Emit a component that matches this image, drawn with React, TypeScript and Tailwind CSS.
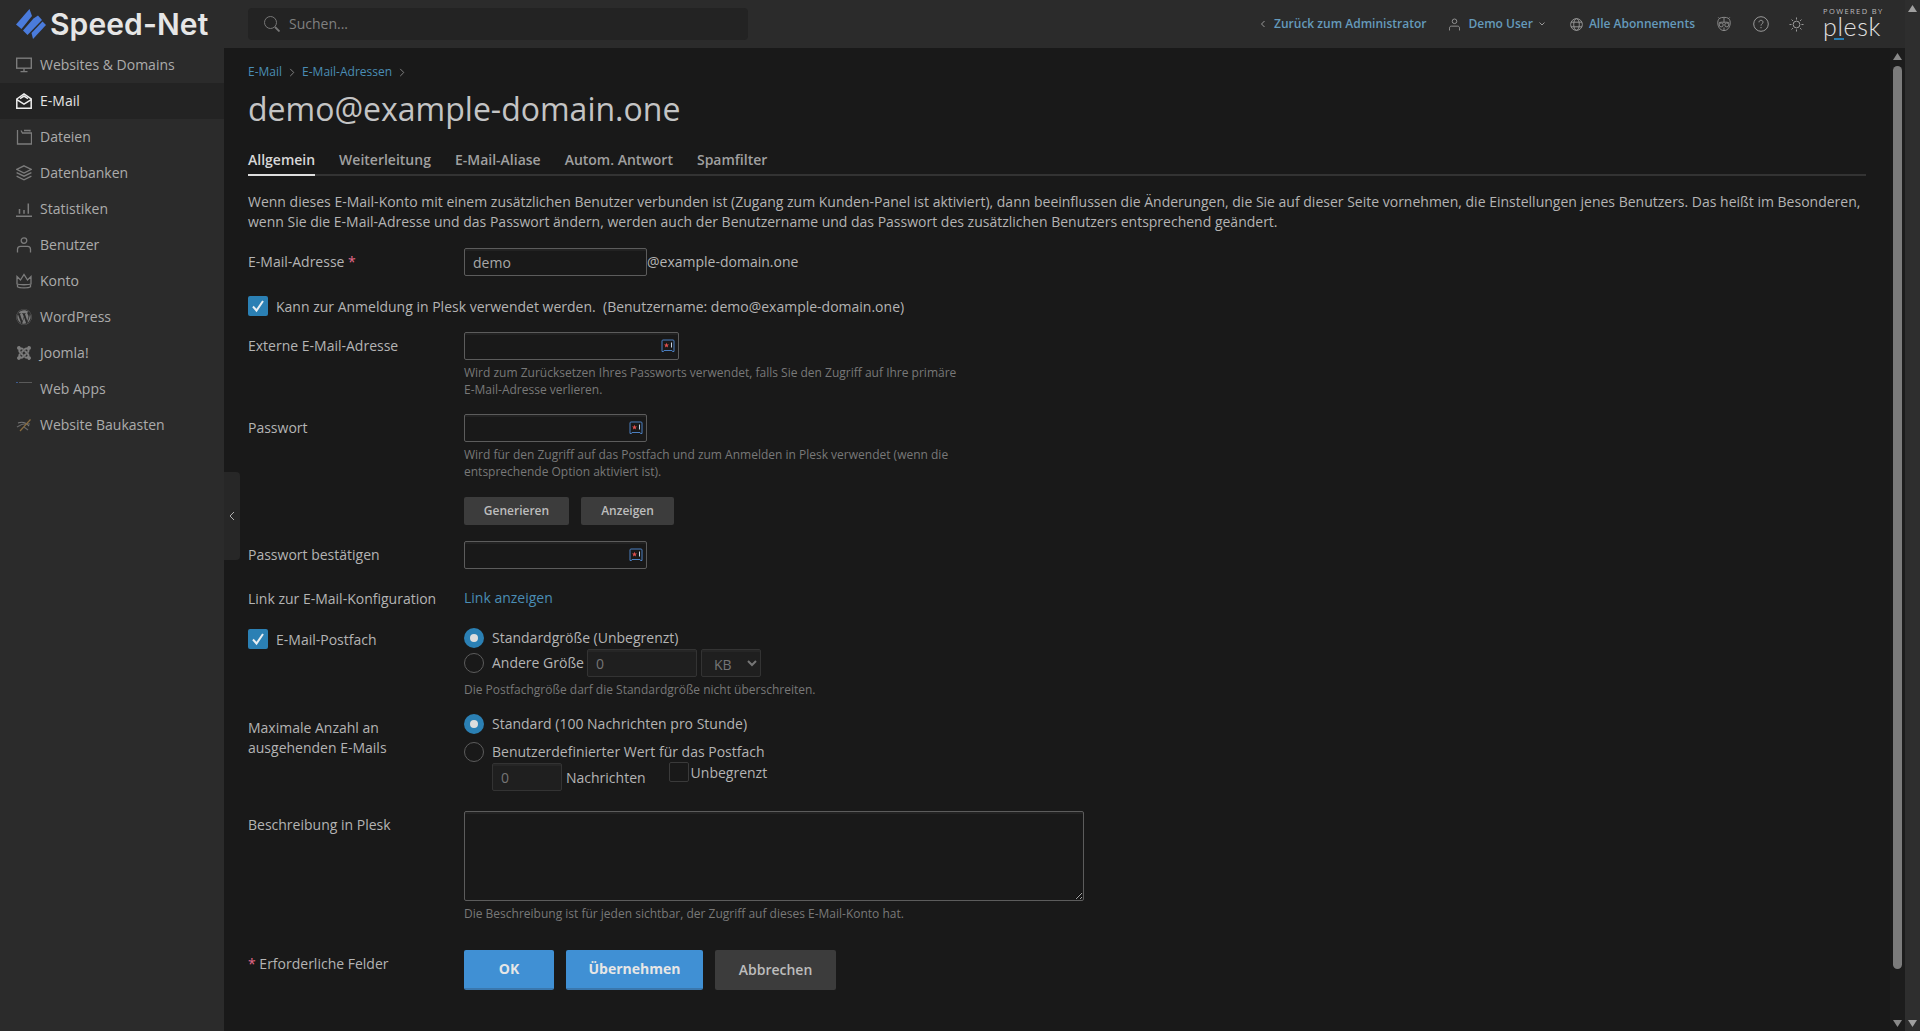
import React from "react";
import { FaWordpress, FaJoomla } from "react-icons/fa";

const s = { fill: "none", stroke: "currentColor", strokeWidth: 1.3 } as const;

const Ico = {
  monitor: (
    <svg viewBox="0 0 16 16" className="w-4 h-4" {...s}>
      <rect x="0.7" y="1.2" width="14.6" height="10" strokeWidth="1.4" />
      <path d="M8 11.5v2.5M4.5 14.6h7" strokeWidth="1.4" />
    </svg>
  ),
  mail: (
    <svg viewBox="0 0 16 16" className="w-4 h-4" fill="none" stroke="currentColor" strokeWidth="1.5">
      <path d="M.8 6 8 .9 15.2 6v9.2H.8z" />
      <path d="M.8 6.6 8 11.2l7.2-4.6M4 5.6l4-2.6 4 2.6" />
    </svg>
  ),
  files: (
    <svg viewBox="0 0 16 16" className="w-4 h-4" {...s}>
      <path d="M1.5 1v14h14V4H6.5L5 1.5M8 1.5h6v1" />
    </svg>
  ),
  layers: (
    <svg viewBox="0 0 16 16" className="w-4 h-4" {...s}>
      <path d="M8 .8 15.4 4.4 8 8 .6 4.4z" />
      <path d="M.6 7.6 8 11.2l7.4-3.6M.6 11.2 8 14.8l7.4-3.6" />
    </svg>
  ),
  stats: (
    <svg viewBox="0 0 16 16" className="w-4 h-4" {...s}>
      <path d="M0 15.2h16M3.5 8v4.8M8 9v3.8M12.3 2.5v10.3" strokeWidth="1.5" />
    </svg>
  ),
  user: (
    <svg viewBox="0 0 16 16" className="w-4 h-4" {...s}>
      <circle cx="8" cy="3.6" r="2.8" />
      <path d="M1.5 15.5v-3.2c0-1.8 1.3-3 3-3h7c1.700 0 3 1.200 3 3v3.200" />
    </svg>
  ),
  crown: (
    <svg viewBox="0 0 16 16" className="w-4 h-4" {...s}>
      <path d="M1 3.500 4.500 7 8 1.500 11.500 7 15 3.500V11c-2 1-12 1-14 0z" />
      <path d="M1.500 11.500v2.300c2 1.400 11 1.400 13 0v-2.300" />
    </svg>
  ),
};

const NAV: [string, React.ReactNode, boolean?][] = [
  ["Websites & Domains", Ico.monitor],
  ["E-Mail", Ico.mail, true],
  ["Dateien", Ico.files],
  ["Datenbanken", Ico.layers],
  ["Statistiken", Ico.stats],
  ["Benutzer", Ico.user],
  ["Konto", Ico.crown],
  ["WordPress", <FaWordpress className="w-4 h-4" />],
  ["Joomla!", <FaJoomla className="w-4 h-4" />],
  [
    "Web Apps",
    <svg viewBox="0 0 16 16" className="w-4 h-4">
      <rect x="0" y="1" width="2" height="1" fill="#3b5a8f" />
      <rect x="3" y="1" width="13" height="1" fill="#5a5a5a" />
    </svg>,
  ],
  [
    "Website Baukasten",
    <svg viewBox="0 0 16 16" className="w-4 h-4" fill="none" strokeWidth="1.2">
      <path d="M2 6c4-1.500 8-.500 11 3" stroke="#777" />
      <path d="M1 10c4-3 9-4 13-3" stroke="#666" />
      <path d="M4 14 14.500 2.500" stroke="#8a6d3f" />
      <path d="M8 10l4 3" stroke="#666" />
    </svg>,
  ],
];

function Keypass() {
  return (
    <svg viewBox="0 0 14 14" className="w-[14px] h-[14px]" fill="none">
      <path d="M1 12.500V2a1 1 0 0 1 1-1h10a1 1 0 0 1 1 1v10.500h-1.500l-.5-1H3l-.5 1z" stroke="#4b7fc0" strokeWidth="1" />
      <path d="m5.500 3.800.7 1.700 1.800.1-1.400 1.200.5 1.800-1.600-1-1.600 1 .5-1.800L3 5.600l1.800-.1z" fill="#e0504f" />
      <path d="M10.500 3.500v5" stroke="#c8d4e4" strokeWidth="1" />
    </svg>
  );
}

const inputCls =
  "h-7 rounded-[2px] border border-[#5c5c5c] bg-[#191919] shadow-[inset_0_2px_0_#222222] px-2 text-sm text-[#a8a8a8] outline-none";
const softInputCls =
  "h-7 rounded-[2px] border border-[#333333] bg-[#1f1f1f] shadow-[inset_0_2px_0_#262626] px-2 text-sm text-[#757575] outline-none";

function PassInput({ width }: { width: string }) {
  return (
    <div className={`relative ${width}`}>
      <input className={`${inputCls} w-full`} />
      <span className="absolute right-[4px] top-[7px] flex">
        <Keypass />
      </span>
    </div>
  );
}

function Check() {
  return (
    <span className="w-5 h-5 shrink-0 rounded-[2px] bg-[#2b80b4] flex items-center justify-center">
      <svg viewBox="0 0 20 20" className="w-5 h-5" fill="none" stroke="#e8eef2" strokeWidth="2">
        <path d="M5 10.500 8.500 14.500 15 5" />
      </svg>
    </span>
  );
}

function Radio({ on }: { on?: boolean }) {
  return on ? (
    <span className="w-5 h-5 shrink-0 rounded-full bg-[#2b80b4] flex items-center justify-center">
      <span className="w-2 h-2 rounded-full bg-[#dddddd]" />
    </span>
  ) : (
    <span className="w-5 h-5 shrink-0 rounded-full border border-[#5c5c5c]" />
  );
}

function Tri({ down, color }: { down?: boolean; color: string }) {
  return (
    <svg viewBox="0 0 9 7" className="w-[9px] h-[7px] shrink-0" style={{ fill: color }}>
      <path d={down ? "M0 0h9L4.500 7z" : "M4.500 0 9 7H0z"} />
    </svg>
  );
}

const Label = ({ children }: { children: React.ReactNode }) => (
  <div className="pt-1 text-sm leading-5 text-[#b4b4b4]">{children}</div>
);
const Hint = ({ children, className = "" }: { children: React.ReactNode; className?: string }) => (
  <div className={`text-xs leading-[17px] text-[#787878] ${className}`}>{children}</div>
);
const Row = ({ children, className = "" }: { children: React.ReactNode; className?: string }) => (
  <div className={`grid grid-cols-[216px_1fr] ${className}`}>{children}</div>
);
const Star = () => <span className="text-[#e56a8a]">*</span>;

export default function App() {
  return (
    <div
      className="flex h-[1031px] w-full overflow-hidden bg-[#191919] text-sm text-[#b4b4b4]"
      style={{ fontFamily: '"Open Sans", "Noto Sans", sans-serif' }}
    >
      <div className="flex min-w-0 flex-1 flex-col">
        {/* top bar */}
        <header className="flex h-12 shrink-0 items-center bg-[#2b2b2b] pr-6">
          <div className="flex w-[224px] shrink-0 items-center pl-4">
            <svg viewBox="0 0 30 30" className="w-[30px] h-[30px] shrink-0" fill="#4a7bdc">
              <path d="M0 15.500 13.500 0l2.500 7L5.500 20z" />
              <path d="M7 21.500 17.500 9.500 22 6.500 26 11 11.500 26z" />
              <path d="M15.500 24 26.500 12.500 30 16 17 30z" />
            </svg>
            <span
              className="ml-1 text-[30px] leading-none font-semibold tracking-[0.1px] text-[#e6e6e6]"
              style={{ fontFamily: "Inter, sans-serif" }}
            >
              Speed-Net
            </span>
          </div>
          <div className="ml-6 flex h-8 w-[500px] items-center rounded bg-[#232323] pl-4">
            <svg viewBox="0 0 16 16" className="w-4 h-4 text-[#777777]" fill="none" stroke="currentColor" strokeWidth="1">
              <circle cx="6.500" cy="6.500" r="6" />
              <path d="m11 11 4.500 4.500" strokeWidth="1.800" />
            </svg>
            <span className="ml-[9px] text-sm text-[#808080]">Suchen...</span>
          </div>
          <nav className="ml-auto flex items-center text-xs font-semibold text-[#659abb]">
            <svg viewBox="0 0 6 8" className="w-[6px] h-2 text-[#999999]" fill="none" stroke="currentColor">
              <path d="M4.500 1 1.500 4l3 3" />
            </svg>
            <span className="ml-2">Zurück zum Administrator</span>
            <svg viewBox="0 0 12 14" className="ml-[23px] w-[11px] h-[13px] text-[#999999]" fill="none" stroke="currentColor">
              <circle cx="6" cy="3.500" r="2.500" />
              <path d="M.5 13.500v-2.500c0-1.500 1-2.200 2-2.200h7c1 0 2 .7 2 2.200v2.500" />
            </svg>
            <span className="ml-2">Demo User</span>
            <svg viewBox="0 0 8 6" className="ml-[5px] w-2 h-[6px] text-[#999999]" fill="none" stroke="currentColor">
              <path d="m1.500 1.500 2.500 2.500 2.500-2.500" />
            </svg>
            <svg viewBox="0 0 14 14" className="ml-6 w-[13px] h-[13px] text-[#9a9a9a]" fill="none" stroke="currentColor">
              <circle cx="7" cy="7" r="6.300" />
              <ellipse cx="7" cy="7" rx="3" ry="6.300" />
              <path d="M1 4.500h12M1 9.500h12" />
            </svg>
            <span className="ml-[6px]">Alle Abonnements</span>
            <svg viewBox="0 0 16 18" className="ml-[22px] w-[14px] h-4 text-[#8e8e8e]" fill="none" stroke="currentColor" strokeWidth="1.100">
              <path d="M3 3 1.500 1.500M13 3l1.500-1.500" />
              <path d="M3 2.500C5 1 11 1 13 2.500c1.500 1.200 2.500 3.500 2 6.500-.5 4.500-3.500 7.500-7 7.500s-6.500-3-7-7.500c-.5-3 .5-5.300 2-6.500z" />
              <path d="M8 2v5M2 8c2-1.500 4-1 6-1s4-.5 6 1" />
              <circle cx="4.800" cy="10" r="2.300" fill="#2b2b2b" />
              <circle cx="11.200" cy="10" r="2.300" fill="#2b2b2b" />
              <path d="M8 13v3.500" />
            </svg>
            <svg viewBox="0 0 16 16" className="ml-[22px] w-4 h-4 text-[#9a9a9a]" fill="none" stroke="currentColor">
              <circle cx="8" cy="8" r="7.300" />
              <path d="M6 6.300C6 5 7 4.300 8 4.300c1.200 0 2 .8 2 1.900 0 1.600-2 1.700-2 3.400" />
              <path d="M8 11v1.200" />
            </svg>
            <svg viewBox="0 0 16 16" className="ml-[20px] w-[15px] h-[15px] text-[#a0a0a0]" fill="none" stroke="currentColor">
              <circle cx="8" cy="8" r="3.600" />
              <path d="M8 .5v2.200M8 13.300v2.200M.5 8h2.200M13.300 8h2.200M2.700 2.700l1.500 1.500M11.800 11.800l1.500 1.500M2.700 13.300l1.500-1.500M11.800 4.200l1.500-1.500" />
            </svg>
          </nav>
          <div className="relative ml-[19px] h-12 w-[58px] shrink-0 pt-[7px]">
            <div className="text-[7.5px] leading-2 tracking-[1.4px] whitespace-nowrap text-[#bdbdbd]">POWERED BY</div>
            <div
              className="mt-[3px] text-[25px] leading-[17px] font-light tracking-[0.6px] text-[#e0e0e0]"
              style={{ fontFamily: "Lato, sans-serif" }}
            >
              plesk
            </div>
            <span className="absolute left-[11px] top-[38px] h-[2px] w-[10px] bg-[#2b80b4]" />
          </div>
        </header>

        <div className="flex min-h-0 flex-1">
          {/* sidebar */}
          <aside className="relative w-[224px] shrink-0 bg-[#2b2b2b]">
            <ul className="-mt-px">
              {NAV.map(([name, icon, active]) => (
                <li
                  key={name}
                  className={`flex h-9 items-center pl-4 text-sm font-medium ${
                    active ? "bg-[#232323] text-[#e4e4e4]" : "text-[#ababab]"
                  }`}
                >
                  <span className={`mr-2 flex w-4 justify-center ${active ? "text-[#eeeeee]" : "text-[#7c7c7c]"}`}>{icon}</span>
                  {name}
                </li>
              ))}
            </ul>
            <div className="absolute left-full top-[424px] flex h-[88px] w-4 items-center justify-center rounded-r bg-[#272727]">
              <svg viewBox="0 0 6 10" className="w-[6px] h-[10px] text-[#b0b0b0]" fill="none" stroke="currentColor">
                <path d="M5 1 1 5l4 4" />
              </svg>
            </div>
          </aside>

          {/* main */}
          <main className="min-w-0 flex-1 pl-6 pr-6 pt-4">
            <div className="flex h-4 items-center text-xs leading-4 text-[#4a8db5]">
              <span>E-Mail</span>
              <svg viewBox="0 0 6 10" className="mx-[7px] w-[6px] h-[9px] text-[#8a8a8a]" fill="none" stroke="currentColor">
                <path d="m1 1 4 4-4 4" />
              </svg>
              <span>E-Mail-Adressen</span>
              <svg viewBox="0 0 6 10" className="mx-[7px] w-[6px] h-[9px] text-[#8a8a8a]" fill="none" stroke="currentColor">
                <path d="m1 1 4 4-4 4" />
              </svg>
            </div>
            <h1 className="mt-[9px] text-[32px] leading-10 font-normal text-[#c4c4c4]">demo@example-domain.one</h1>

            <div className="mt-[21px] flex gap-6 border-b-2 border-[#333333] text-sm font-semibold leading-5 text-[#a0a0a0]">
              {["Allgemein", "Weiterleitung", "E-Mail-Aliase", "Autom. Antwort", "Spamfilter"].map((t, i) => (
                <div
                  key={t}
                  className={`pb-1 -mb-[2px] border-b-2 ${i === 0 ? "border-[#dddddd] text-[#d8d8d8]" : "border-transparent"}`}
                >
                  {t}
                </div>
              ))}
            </div>

            <p className="mt-4 text-sm leading-5 text-[#b4b4b4]">
              Wenn dieses E-Mail-Konto mit einem zusätzlichen Benutzer verbunden ist (Zugang zum Kunden-Panel ist aktiviert), dann beeinflussen die Änderungen, die Sie auf dieser Seite vornehmen, die Einstellungen jenes Benutzers. Das heißt im Besonderen, wenn Sie die E-Mail-Adresse und das Passwort ändern, werden auch der Benutzername und das Passwort des zusätzlichen Benutzers entsprechend geändert.
            </p>

            <Row className="mt-4">
              <Label>
                E-Mail-Adresse <Star />
              </Label>
              <div className="flex items-center">
                <input className={`${inputCls} w-[183px]`} defaultValue="demo" />
                <span>@example-domain.one</span>
              </div>
            </Row>

            <div className="mt-5 flex h-5 items-center">
              <Check />
              <span className="ml-2 pt-px">Kann zur Anmeldung in Plesk verwendet werden.&nbsp; (Benutzername: demo@example-domain.one)</span>
            </div>

            <Row className="mt-4">
              <Label>Externe E-Mail-Adresse</Label>
              <div>
                <PassInput width="w-[215px]" />
                <Hint className="mt-1 w-[500px]">
                  Wird zum Zurücksetzen Ihres Passworts verwendet, falls Sie den Zugriff auf Ihre primäre E-Mail-Adresse verlieren.
                </Hint>
              </div>
            </Row>

            <Row className="mt-4">
              <Label>Passwort</Label>
              <div>
                <PassInput width="w-[183px]" />
                <Hint className="mt-1 w-[500px]">
                  Wird für den Zugriff auf das Postfach und zum Anmelden in Plesk verwendet (wenn die entsprechende Option aktiviert ist).
                </Hint>
                <div className="mt-[17px] flex gap-3">
                  <button className="h-7 w-[105px] rounded-[2px] bg-[#3c3c3c] text-xs font-semibold text-[#bdbdbd]">Generieren</button>
                  <button className="h-7 w-[93px] rounded-[2px] bg-[#3c3c3c] text-xs font-semibold text-[#bdbdbd]">Anzeigen</button>
                </div>
              </div>
            </Row>

            <Row className="mt-4">
              <Label>Passwort bestätigen</Label>
              <PassInput width="w-[183px]" />
            </Row>

            <Row className="mt-5">
              <div className="text-sm leading-5">Link zur E-Mail-Konfiguration</div>
              <div className="-mt-px text-sm leading-5 text-[#4a8db5]">Link anzeigen</div>
            </Row>

            <Row className="mt-[19px]">
              <div className="mt-px flex h-5 items-center">
                <Check />
                <span className="ml-2 pt-px">E-Mail-Postfach</span>
              </div>
              <div>
                <div className="flex h-5 items-center">
                  <Radio on />
                  <span className="ml-2">Standardgröße (Unbegrenzt)</span>
                </div>
                <div className="mt-[1px] flex h-7 items-center">
                  <Radio />
                  <span className="ml-2">Andere Größe</span>
                  <input className={`${softInputCls} ml-[3px] w-[110px]`} defaultValue="0" />
                  <select className={`${softInputCls} ml-[4px] w-[60px] pl-2 pr-0 pt-[2px] [color-scheme:dark]`} defaultValue="KB">
                    <option>KB</option>
                  </select>
                </div>
                <Hint className="mt-1">Die Postfachgröße darf die Standardgröße nicht überschreiten.</Hint>
              </div>
            </Row>

            <Row className="mt-4">
              <div className="pt-1 text-sm leading-5">
                Maximale Anzahl an
                <br />
                ausgehenden E-Mails
              </div>
              <div>
                <div className="flex h-5 items-center">
                  <Radio on />
                  <span className="ml-2">Standard (100 Nachrichten pro Stunde)</span>
                </div>
                <div className="mt-2 flex h-5 items-center">
                  <Radio />
                  <span className="ml-2">Benutzerdefinierter Wert für das Postfach</span>
                </div>
                <div className="ml-7 flex items-start">
                  <input className={`${softInputCls} mt-px w-[70px]`} defaultValue="0" />
                  <span className="ml-1 mt-[6px] leading-5">Nachrichten</span>
                  <span className="ml-[23px] h-5 w-5 rounded-[2px] border border-[#3a3a3a]" />
                  <span className="ml-[2px] mt-px leading-5">Unbegrenzt</span>
                </div>
              </div>
            </Row>

            <Row className="mt-5">
              <Label>Beschreibung in Plesk</Label>
              <div>
                <textarea
                  className="block h-[90px] w-[620px] rounded-[2px] border border-[#5c5c5c] bg-[#191919] shadow-[inset_0_2px_0_#222222] outline-none [color-scheme:dark]"
                />
                <Hint className="mt-1 w-[620px]">Die Beschreibung ist für jeden sichtbar, der Zugriff auf dieses E-Mail-Konto hat.</Hint>
              </div>
            </Row>

            <Row className="mt-7">
              <Label>
                <Star /> Erforderliche Felder
              </Label>
              <div className="flex gap-3">
                <button className="h-10 w-[90px] rounded-[2px] border-b-2 border-[#3a77ad] bg-[#4090d4] font-bold text-[#e6e6e6]">OK</button>
                <button className="h-10 w-[137px] rounded-[2px] border-b-2 border-[#3a77ad] bg-[#4090d4] font-bold text-[#e6e6e6]">Übernehmen</button>
                <button className="h-10 w-[121px] rounded-[2px] bg-[#3c3c3c] font-semibold text-[#bdbdbd]">Abbrechen</button>
              </div>
            </Row>
          </main>

          {/* inner scrollbar */}
          <div className="flex w-[15px] shrink-0 flex-col items-center bg-[#1c1c1c] pt-[5px] pb-1">
            <Tri color="#8a8a8a" />
            <div className="mt-[6px] h-[903px] w-[9px] rounded-full bg-[#7c7c7c]" />
            <div className="mt-auto">
              <Tri down color="#8a8a8a" />
            </div>
          </div>
        </div>
      </div>

      {/* outer scrollbar */}
      <div className="flex w-[15px] shrink-0 flex-col items-center justify-between bg-[#2e2e2e] pt-[5px] pb-1">
        <Tri color="#a0a0a0" />
        <Tri down color="#a0a0a0" />
      </div>
    </div>
  );
}
